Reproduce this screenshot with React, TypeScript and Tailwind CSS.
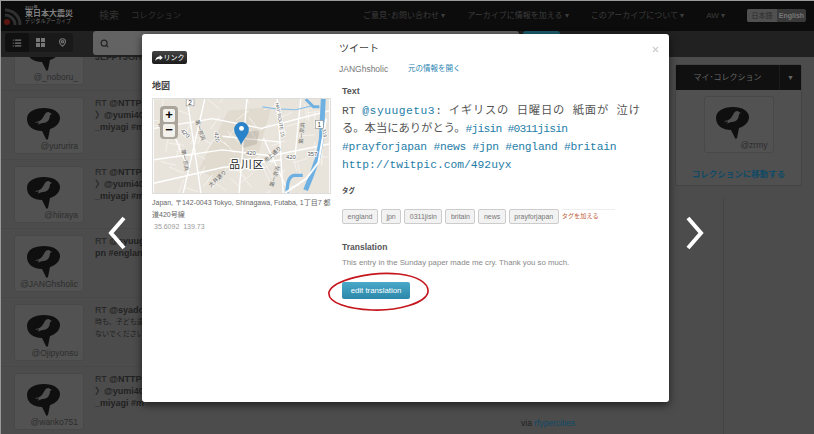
import { List, MapPin, Search, X } from 'lucide-react';

const sans = 'font-["Liberation_Sans","Noto_Sans_CJK_JP",sans-serif]';

function BirdAvatar({ handle }: { handle: string }) {
  return (
    <div className="w-[70px] h-[57px] rounded-[3px] border border-[#484848] bg-[#525252] flex flex-col items-center pt-[10px] shrink-0">
      <svg viewBox="0 0 33 32" className="w-[33px] h-[32px] shrink-0 -ml-[12px]">
        <path d="M17 0c9 0 16 4 16 10 0 5-4 9-10 11l-2 10c-1 1-2 1-2 0l-4-8C7 23 0 19 0 11 0 4 7 0 17 0z" fill="#0f0f0f" />
        <path d="M8 14c3 0 5-1 7-3l3-5c1-2 4-3 5-1l2 1-2 1c0 5-3 8-7 8-2 0-4 1-5 2l1-3c-1 1-3 1-4 0z" fill="#505050" />
      </svg>
      <span className="text-[8.5px] leading-[12px] text-[#2d2d2d] w-full pr-[5px] whitespace-nowrap text-right">
        {handle}
      </span>
    </div>
  );
}

function TweetRow({ handle, lines, jp, top }: { handle: string; lines: string[]; jp?: boolean; top?: boolean }) {
  return (
    <div className="h-[69px] shrink-0">
      <div className="h-[63px] border-b border-[#484848] flex gap-[11px] pl-[14px]">
        <BirdAvatar handle={handle} />
        <div className={`text-[9px] leading-[12px] text-[#222] whitespace-nowrap ${top ? 'pt-[23px]' : 'pt-[0px]'}`}>
          {lines.map((l, i) => (
            <p key={l} className={i > 0 && jp ? 'font-normal text-[7px]' : 'font-bold'}>
              {l.startsWith('RT ') ? (
                <>
                  <span className="font-normal">RT </span>
                  {l.slice(3)}
                </>
              ) : (
                l
              )}
            </p>
          ))}
        </div>
      </div>
    </div>
  );
}

// little side streets of the map
const streets = Array.from({ length: 70 }, (_, i) => {
  const x = (i * 37.3) % 179;
  const y = (i * 23.7) % 96;
  const a = i * 1.9;
  return `M${x.toFixed(1)} ${y.toFixed(1)}l${(Math.cos(a) * 16).toFixed(1)} ${(Math.sin(a) * 16).toFixed(1)}`;
}).join('');

function MapThumb() {
  return (
    <div className="relative w-[179px] h-[96px] border border-[#ddd] overflow-hidden mt-[6px]">
      <svg viewBox="0 0 179 96" className="w-full h-full block">
        <rect width="179" height="96" fill="#e8e4dc" />
        <path d="M76 12l44-4-14 50-46 22-14-8z" fill="#e0dacf" />
        <path d={streets} stroke="#f6f4ef" strokeWidth="0.9" fill="none" />
        <path d="M0 30L60 20l50 10 69-18M0 62l70-10 50 6 59-12M34 0l14 96M52 0L30 96M95 0l-8 96M126 0l6 96M0 86l70-16 60-8M150 0l-6 60M70 38l60 6M8 8l26 60M112 40l24 52" stroke="#fff" strokeWidth="1.4" fill="none" />
        <path d="M111 8l14 2 20 1 16-4" stroke="#8cc0e6" strokeWidth="1.2" fill="none" />
        <path d="M155 0l8 8h6" stroke="#6fb0e2" strokeWidth="3" fill="none" />
        <path d="M173 0l-2 41-3 17-7 20-6 15" stroke="#6fb0e2" strokeWidth="5" fill="none" />
        <path d="M136 96q0-18 8-18h8" stroke="#6fb0e2" strokeWidth="3.5" fill="none" />
        <path d="M176 20l-8 45-12 16-22 15" stroke="#fff" strokeWidth="2" fill="none" />
        <path d="M90 34l18-2-3 14-14 4z" fill="#8a8478" opacity="0.25" />
        <g fontFamily="Noto Sans CJK JP" fontSize="5.5" fill="#666">
          <text x="8" y="30" transform="rotate(-70 8 30)">中原街道</text>
          <text x="42" y="22" transform="rotate(72 42 22)">第一京浜</text>
          <text x="28" y="52" transform="rotate(80 28 52)">第一京浜</text>
          <text x="58" y="90" transform="rotate(-42 58 90)">大井通り</text>
          <text x="114" y="65" transform="rotate(-40 114 65)">池上通り</text>
          <text x="122" y="90" transform="rotate(-72 122 90)">第一京浜</text>
          <text x="152" y="46" transform="rotate(-85 152 46)">第一京浜</text>
        </g>
        <g fontFamily="Liberation Sans" fontSize="6" fill="#555" stroke="#fff" strokeWidth="1.5" paintOrder="stroke">
          <text x="94" y="57">420</text>
          <text x="135" y="61">420</text>
          <text x="157" y="58">357</text>
          <text x="27" y="33" transform="rotate(45 27 33)">420</text>
          <text x="62" y="34" transform="rotate(85 62 34)">420</text>
          <text x="124" y="4" fontSize="5" transform="rotate(80 124 4)">HAY ROUTE 15</text>
          <text x="172" y="31" fontSize="5" transform="rotate(80 172 31)">316</text>
        </g>
        <rect x="33" y="0" width="8" height="7" fill="#fff" stroke="#888" strokeWidth="0.6" />
        <text x="35" y="6" fontSize="6.5" fill="#333" fontFamily="Liberation Sans">2</text>
        <rect x="165" y="22" width="8" height="8" fill="#fff" stroke="#888" strokeWidth="0.6" />
        <text x="167" y="29" fontSize="6.5" fill="#333" fontFamily="Liberation Sans">1</text>
        <text x="77" y="70" fontSize="11" letterSpacing="1" fill="#222" stroke="#fff" strokeWidth="2.5" paintOrder="stroke" fontFamily="Noto Sans CJK JP">品川区</text>
        <path d="M89 47c-2-7-7-10-7-16a7.5 7.5 0 0115 0c0 6-5 9-8 16z" fill="#2a83c9" />
        <circle cx="89.5" cy="30" r="2.5" fill="#fff" />
      </svg>
      <div className="absolute left-[7px] top-[7px] w-[18px] h-[33px] rounded-[4px] bg-[#aaa49a] flex flex-col items-center justify-center gap-[2px]">
        <span className="w-[12px] h-[13px] bg-[#f3f1ec] rounded-[2px] text-[13px] leading-[12px] font-bold text-center text-black">+</span>
        <span className="w-[12px] h-[13px] bg-[#f3f1ec] rounded-[2px] text-[13px] leading-[12px] font-bold text-center text-black">−</span>
      </div>
    </div>
  );
}

const tags = ['england', 'jpn', '0311jisin', 'britain', 'news', 'prayforjapan'];

export default function App() {
  return (
    <div className={`relative w-[814px] h-[434px] overflow-hidden bg-[#4c4c4c] flex flex-col ${sans}`}>
      {/* top nav */}
      <div className="relative z-10 h-[31px] bg-[#0c0c0c] flex items-center shrink-0 pl-[3px] pr-[8px] text-[8px] text-[#3d3d3d]">
        <svg viewBox="0 0 20 20" className="w-[20px] h-[20px]">
          <path d="M2 9c5 0 10 4 10 10M2 4c8 0 15 6 15 15" stroke="#303030" strokeWidth="3" fill="none" />
          <circle cx="4" cy="16" r="3" fill="#5a1512" />
        </svg>
        <div className="ml-[2px] w-[48px] leading-none text-[#6f6f6f]">
          <p className="text-[4px] font-bold w-[16px] whitespace-nowrap">2011年</p>
          <p className="text-[8px] font-bold whitespace-nowrap text-[#808080]">東日本大震災</p>
          <p className="text-[5.2px] whitespace-nowrap mt-[1px]">デジタルアーカイブ</p>
        </div>
        <span className="ml-[26px] text-[10px] text-[#333]">検索</span>
        <span className="ml-[12px] text-[8.4px] text-[#333]">コレクション</span>
        <div className="ml-auto flex items-center gap-[22px]">
          <span>ご意見･お問い合わせ ▾</span>
          <span>アーカイブに情報を加える ▾</span>
          <span>このアーカイブについて ▾</span>
          <span>AW ▾</span>
          <div className="flex h-[13px] w-[59px] rounded-[2px] overflow-hidden text-[7px] leading-[13px] bg-[#3a3a3a] text-[#777] text-center">
            <span className="w-[30px] bg-[#505050] text-[#2c2c2c]">日本語</span>
            <span className="flex-1 font-bold">English</span>
          </div>
        </div>
      </div>
      {/* view toggle and search bar */}
      <div className="relative z-10 h-[26px] bg-[#212121] flex shrink-0 pl-[5px]">
        <div className="flex h-[19px] mt-[2px] rounded-[3px] overflow-hidden text-[#777]">
          <span className="w-[24px] bg-[#101010] flex items-center justify-center"><List size={10} strokeWidth={3} /></span>
          <span className="w-[22px] bg-[#191919] flex items-center justify-center">
            <svg viewBox="0 0 9 9" className="w-[9px] h-[9px]" fill="currentColor">
              <rect width="4" height="4" />
              <rect x="5" width="4" height="4" />
              <rect y="5" width="4" height="4" />
              <rect x="5" y="5" width="4" height="4" />
            </svg>
          </span>
          <span className="w-[22px] bg-[#191919] flex items-center justify-center"><MapPin size={9} strokeWidth={3} /></span>
        </div>
        <div className="ml-[20px] w-[426px] h-[24px] bg-[#636363] rounded-[3px] flex items-center pl-[7px] text-[#222]">
          <Search size={9} strokeWidth={3} />
        </div>
        <div className="ml-[4px] w-[37px] h-[24px] rounded-[3px] bg-[#1b5a6c]" />
      </div>
      {/* page behind the modal */}
      <div className="flex flex-1 min-h-0">
        <div className="w-[660px] shrink-0 flex flex-col h-full -mt-[29px]">
          <TweetRow handle="@_noboru_" lines={['JEFFYJOHN']} top />
          <TweetRow handle="@yururira" lines={['RT @NTTPR', '〉@yumi405', '_miyagi #m']} />
          <TweetRow handle="@hiiraya" lines={['RT @NTTPR', '〉@yumi405', '_miyagi #m']} />
          <TweetRow handle="@JANGhsholic" lines={['RT @syuuge', 'pn #englan']} />
          <TweetRow handle="@Ojipyonsu" lines={['RT @syadoy', '時も、子ども達', 'ないでください']} jp />
          <TweetRow handle="@wanko751" lines={['RT @NTTPR', '〉@yumi405', '_miyagi #m']} />
        </div>
        <div className="flex-1 pt-[7px] pl-[15px] pr-[12px]">
          <div className="h-[122px] rounded-[3px] border border-[#444] bg-[#505050] flex flex-col items-center">
            <div className="w-full h-[25px] bg-[#101010] flex items-center text-[8px] text-[#666] shrink-0">
              <span className="flex-1 text-center">マイ･コレクション</span>
              <span className="w-[22px] text-center text-[7px] border-l border-[#1c1c1c] leading-[25px]">▼</span>
            </div>
            <div className="mt-[6px]"><BirdAvatar handle="@zrmy" /></div>
            <p className="mt-[15px] text-[8.5px] leading-[12px] font-bold text-[#0f4a66] whitespace-nowrap">コレクションに移動する</p>
          </div>
        </div>
      </div>
      <p className="absolute left-[521px] top-[417px] text-[8.5px] leading-[12px] text-[#222]">via <span className="text-[#0f4a66]">rfypercities</span></p>
      <div className="absolute left-[723px] top-[197px] bottom-0 w-px bg-[#444]" />

      {/* modal */}
      <div className="absolute z-20 left-[142px] top-[34px] w-[527px] h-[368px] bg-white rounded-[3px] shadow-[0_3px_8px_rgba(0,0,0,0.6)] flex pl-[10px] pt-[17px] pr-[20px]">
        <div className="w-[179px] shrink-0">
          <button className="h-[13px] w-[35px] rounded-[2px] bg-gradient-to-b from-[#444] to-[#1c1c1c] text-white text-[7px] leading-[13px] flex items-center justify-center gap-[1px]">
            <svg viewBox="0 0 10 8" className="w-[8px] h-[6px]">
              <path d="M6 0l4 3.5L6 7V5C3.5 5 1.5 5.5 0 8c0-3.5 2.5-6 6-6z" fill="#fff" />
            </svg>
            リンク
          </button>
          <p className="mt-[16px] text-[9px] leading-[12px] font-bold text-[#444]">地図</p>
          <MapThumb />
          <p className="mt-[3px] text-[7px] leading-[12px] text-[#666]">Japan, 〒142-0043 Tokyo, Shinagawa, Futaba, 1丁目7 都道420号線</p>
          <p className="ml-[2px] text-[7px] leading-[12px] text-[#999]">35.6092&nbsp; 139.73</p>
        </div>
        <div className="flex-1 pl-[8px] -mt-[11px] relative">
          <h2 className="text-[10px] leading-[18px] text-[#444]">ツイート</h2>
          <div className="mt-[5px] flex text-[8.5px] leading-[12px]">
            <span className="w-[69px] text-[#777]">JANGhsholic</span>
            <span className="text-[7.5px] text-[#2a86b2]">元の情報を開く</span>
          </div>
          <div className="pl-[3px] mt-[10px]">
            <p className="text-[9px] leading-[12px] font-bold text-[#555]">Text</p>
            <div className='mt-[5px] text-[11.3px] leading-[18px] text-[#555] whitespace-nowrap font-["Liberation_Mono","Noto_Sans_CJK_JP",monospace]'>
              <p>
                RT <span className="text-[#1f7ea8] tracking-[0.5px]">@syuugetu3</span>: <span className="tracking-[0.8px]">イギリスの 日曜日の 紙面が 泣け</span>
              </p>
              <p>
                る。本当にありがとう。<span className="text-[#1f7ea8] tracking-[-0.8px]">#jisin #0311jisin</span>
              </p>
              <p className="text-[#1f7ea8] tracking-[-0.25px]">#prayforjapan #news #jpn #england #britain</p>
              <p className="text-[#1f7ea8]">http://twitpic.com/492uyx</p>
            </div>
            <p className="mt-[11px] text-[6.5px] leading-[12px] font-bold text-[#444]">タグ</p>
            <div className="mt-[12px] flex gap-[3px] items-start">
              {tags.map((t) => (
                <span key={t} className="h-[15px] px-[4.5px] rounded-[2px] border border-[#ccc] bg-[#f2f2f2] text-[7px] leading-[13px] text-[#777]">{t}</span>
              ))}
              <span className="border-t border-[#eee] w-[53px] text-[6.2px] leading-[11px] text-[#c0603c] whitespace-nowrap">タグを加える</span>
            </div>
            <p className="mt-[17px] text-[8.5px] leading-[12px] font-bold text-[#555]">Translation</p>
            <p className="mt-[4px] text-[7.8px] leading-[12px] text-[#888] whitespace-nowrap">This entry in the Sunday paper made me cry. Thank you so much.</p>
            <button className="mt-[13px] w-[68px] h-[17px] rounded-[2px] bg-gradient-to-b from-[#49a9c9] to-[#2b88aa] text-white text-[7.8px]">edit translation</button>
          </div>
        </div>
        <X size={9} strokeWidth={3} className="absolute right-[9px] top-[11px] text-[#ccc]" />
      </div>

      {/* red hand-drawn ring */}
      <svg viewBox="0 0 103 42" className="absolute z-30 left-[327px] top-[271px] w-[103px] h-[42px]" fill="none">
        <path d="M2 21C6 9 44 0 72 3c18 2 30 9 29 18-2 11-30 19-56 18C22 38 0 32 2 21" stroke="#c4161c" strokeWidth="1.6" />
      </svg>

      {/* gallery arrows */}
      <svg viewBox="0 0 18 34" className="absolute z-30 left-[108px] top-[216px] w-[18px] h-[34px]" fill="none">
        <path d="M16 2L3 17l13 15" stroke="#fff" strokeWidth="4" />
      </svg>
      <svg viewBox="0 0 18 34" className="absolute z-30 left-[686px] top-[216px] w-[18px] h-[34px]" fill="none">
        <path d="M2 2l13 15L2 32" stroke="#fff" strokeWidth="4" />
      </svg>
      <div className="absolute inset-0 z-40 border-l border-t border-[#9a9a9a] pointer-events-none" />
    </div>
  );
}
